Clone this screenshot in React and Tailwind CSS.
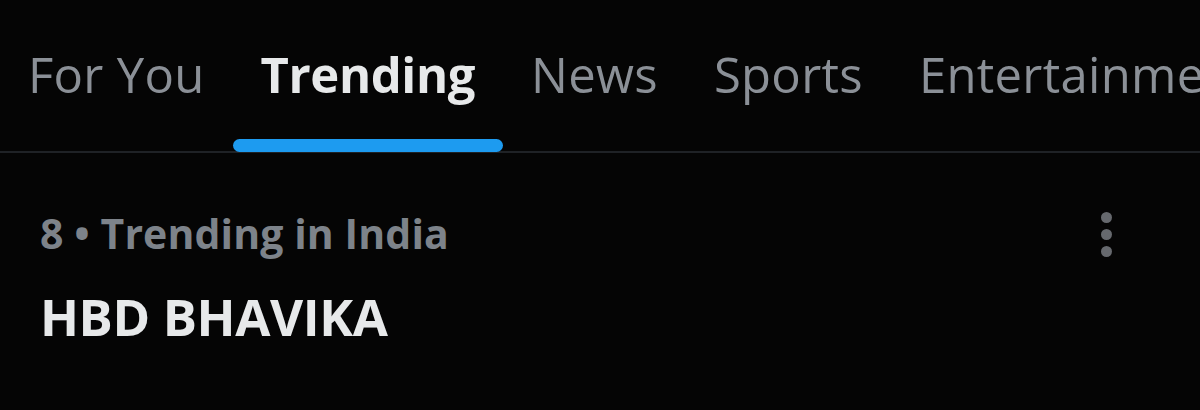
const tabs = ["For You", "Trending", "News", "Sports", "Entertainment"];

export default function App() {
  return (
    <div
      className="w-[1200px] h-[410px] overflow-hidden bg-[#050505]"
      style={{ fontFamily: '"Open Sans", "Liberation Sans", sans-serif' }}
    >
      <div className="relative h-[153px] border-b-2 border-[#1f2226]">
        <div className="flex h-full whitespace-nowrap">
          {tabs.map((t) => {
            const active = t === "Trending";
            return (
              <div key={t} className="relative flex h-full shrink-0 px-7">
                <span
                  className={
                    "pt-[38px] text-[49px] leading-[72px] " +
                    (active ? "font-bold text-[#e7e9ea] tracking-[-0.4px]" : "font-normal text-[#8b9097] tracking-[0.3px]")
                  }
                >
                  {t}
                </span>
                {active && (
                  <div className="absolute bottom-[-1px] left-0 right-0 h-[13px] rounded-full bg-[#1d9bf0]" />
                )}
              </div>
            );
          })}
        </div>
      </div>

      <div className="flex items-start justify-between pl-10 pr-[88px] pt-[55px]">
        <div className="flex flex-col">
          <span className="text-[41px] leading-[50px] font-bold text-[#7d838a] tracking-[0.1px]">
            8 • Trending in India
          </span>
          <span className="mt-[28px] text-[51px] leading-[60px] font-bold text-[#e7e9ea] tracking-[-0.4px]">
            HBD BHAVIKA
          </span>
        </div>
        <div className="flex flex-col items-center gap-[6px] pt-[4px]">
          <span className="h-[11px] w-[11px] rounded-full bg-[#66696e]" />
          <span className="h-[11px] w-[11px] rounded-full bg-[#66696e]" />
          <span className="h-[11px] w-[11px] rounded-full bg-[#66696e]" />
        </div>
      </div>
    </div>
  );
}
